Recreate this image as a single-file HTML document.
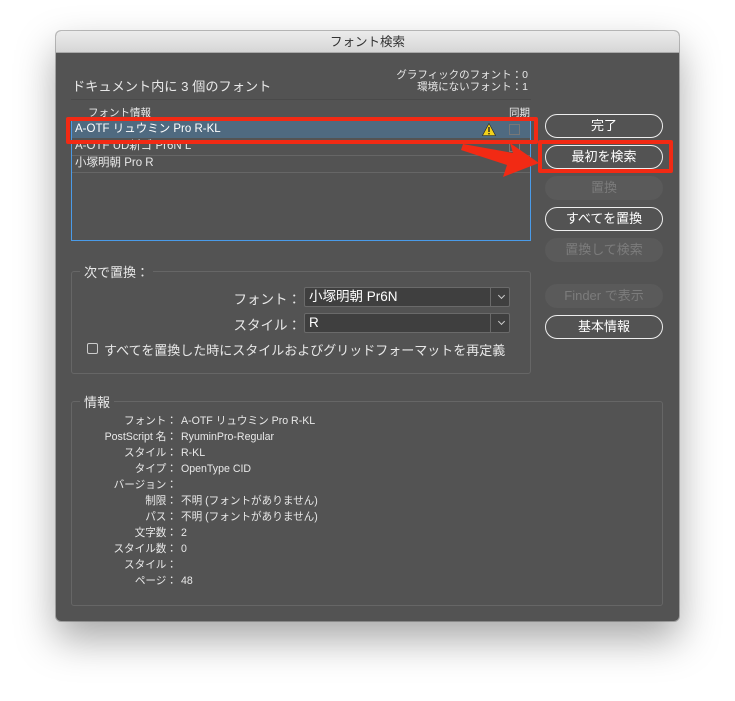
<!DOCTYPE html>
<html><head><meta charset="utf-8"><style>
*{margin:0;padding:0;box-sizing:border-box}
body{width:735px;height:701px;background:#fff;position:relative;overflow:hidden;font-family:"Liberation Sans","Noto Sans CJK JP",sans-serif;color:#e8e8e8}
.win{position:absolute;left:56px;top:31px;width:623px;height:590px;background:#535353;border-radius:5px;box-shadow:0 18px 40px rgba(0,0,0,.35),0 0 0 1px rgba(0,0,0,.25);overflow:hidden}
.tb{position:absolute;left:0;top:0;width:100%;height:22px;background:linear-gradient(#ececec,#d6d6d6);border-bottom:1px solid #aaa;color:#333;font-size:12.5px;text-align:center;line-height:22px}
.a{position:absolute;white-space:nowrap}
.btn{position:absolute;left:489px;width:118px;height:24px;border:1.5px solid #eee;border-radius:12px;text-align:center;line-height:21px;font-size:13px;color:#fff}
.dis{border:none;background:#5a5a5a;color:#7c7c7c;line-height:24px}
.grp{position:absolute;border:1px solid #666;border-radius:3px}
.lbl{position:absolute;background:#535353;padding:0 4px;font-size:13px}
.sel{position:absolute;left:248px;width:206px;height:20px;background:#3f3f3f;border:1px solid #6a6a6a;border-radius:2px;font-size:13.5px;line-height:18px;padding-left:4px;color:#fff}
.sel:after{content:"";position:absolute;right:0;top:0;width:18px;height:18px;border-left:1px solid #6a6a6a}
.chev{position:absolute;right:5px;top:5px;width:5px;height:5px;border-right:1px solid #ccc;border-bottom:1px solid #ccc;transform:rotate(45deg)}
.info{position:absolute;font-size:10.6px;line-height:16px}
.red{position:absolute;border:4px solid #f22a14;border-radius:2px}
</style></head><body>
<div class="win">
<div class="tb">フォント検索</div>
<div class="a" style="left:16px;top:45px;font-size:13.2px">ドキュメント内に 3 個のフォント</div>
<div class="a" style="right:151px;top:38px;font-size:10.5px;text-align:right;line-height:12px">グラフィックのフォント：0<br>環境にないフォント：1</div>
<div class="a" style="left:15px;top:68px;width:460px;height:1px;background:#4a4a4a"></div>
<div class="a" style="left:32px;top:74px;font-size:10.5px">フォント情報</div>
<div class="a" style="left:453px;top:74px;font-size:10.5px">同期</div>
<div class="a" style="left:15px;top:88px;width:460px;height:122px;border:1px solid #4a9be8;background:#535353">
 <div class="a" style="left:0;top:1px;width:458px;height:17px;background:#4f6a80"></div>
 <div class="a" style="left:3px;top:1px;font-size:11.5px;line-height:17px;color:#fff">A-OTF リュウミン Pro R-KL</div>
 <div class="a" style="left:3px;top:18px;font-size:11.5px;line-height:17px">A-OTF UD新ゴ Pr6N L</div>
 <div class="a" style="left:0;top:35px;width:458px;height:1px;background:#666"></div>
 <div class="a" style="left:3px;top:35px;font-size:11.5px;line-height:17px">小塚明朝 Pro R</div>
 <div class="a" style="left:0;top:52px;width:458px;height:1px;background:#666"></div>
 <svg class="a" style="left:410px;top:3px" width="14" height="13"><polygon points="7,0.5 13.5,12.5 0.5,12.5" fill="#f3d21b" stroke="#222" stroke-width=".6"/><rect x="6.3" y="4" width="1.4" height="5" fill="#222"/><rect x="6.3" y="10" width="1.4" height="1.4" fill="#222"/></svg>
 <div class="a" style="left:437px;top:4px;width:11px;height:11px;border:1px solid #777"></div>
 <div class="a" style="left:437px;top:21px;width:11px;height:11px;border:1px solid #777"></div>
</div>
<div class="red" style="left:10px;top:86px;width:472px;height:27px"></div>
<svg class="a" style="left:405px;top:108px" width="80" height="40"><polygon points="2,5 52,14 49,4 78,24 42,38 46,26 0,11" fill="#f22a14"/></svg>
<div class="btn" style="top:83px">完了</div>
<div class="btn" style="top:114px">最初を検索</div>
<div class="red" style="left:482px;top:109px;width:135px;height:33px"></div>
<div class="btn dis" style="top:145px">置換</div>
<div class="btn" style="top:176px">すべてを置換</div>
<div class="btn dis" style="top:207px">置換して検索</div>
<div class="btn dis" style="top:253px">Finder で表示</div>
<div class="btn" style="top:284px">基本情報</div>
<div class="grp" style="left:15px;top:240px;width:460px;height:103px"></div>
<div class="lbl" style="left:24px;top:231px">次で置換：</div>
<div class="a" style="right:378px;top:257px;font-size:13.5px">フォント：</div>
<div class="sel" style="top:256px">小塚明朝 Pr6N<span class="chev"></span></div>
<div class="a" style="right:378px;top:283px;font-size:13.5px">スタイル：</div>
<div class="sel" style="top:282px">R<span class="chev"></span></div>
<div class="a" style="left:31px;top:312px;width:11px;height:11px;border:1px solid #ccc;border-radius:2px"></div>
<div class="a" style="left:48px;top:309px;font-size:13px">すべてを置換した時にスタイルおよびグリッドフォーマットを再定義</div>
<div class="grp" style="left:15px;top:370px;width:592px;height:205px"></div>
<div class="lbl" style="left:24px;top:361px">情報</div>
<div class="info" style="right:502px;top:382px;text-align:right">フォント：<br>PostScript 名：<br>スタイル：<br>タイプ：<br>バージョン：<br>制限：<br>パス：<br>文字数：<br>スタイル数：<br>スタイル：<br>ページ：</div>
<div class="info" style="left:125px;top:382px">A-OTF リュウミン Pro R-KL<br>RyuminPro-Regular<br>R-KL<br>OpenType CID<br>&nbsp;<br>不明 (フォントがありません)<br>不明 (フォントがありません)<br>2<br>0<br>&nbsp;<br>48</div>
</div>
</body></html>
